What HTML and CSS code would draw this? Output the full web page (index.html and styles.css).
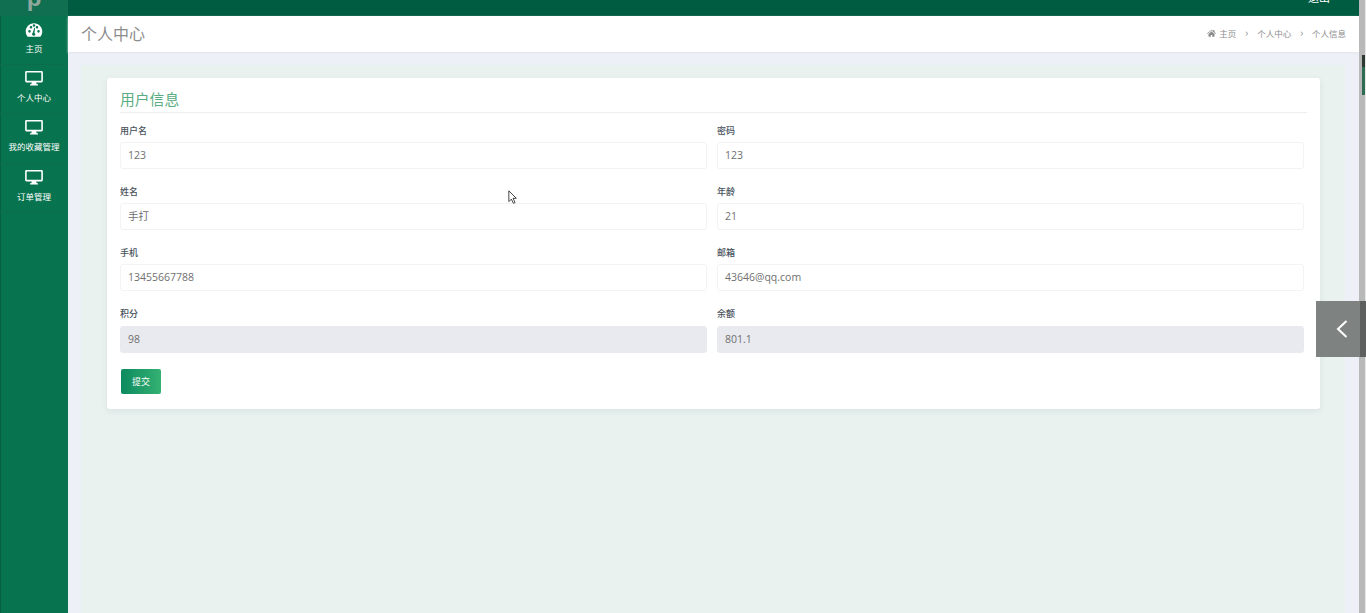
FILE: index.html
```html
<!DOCTYPE html>
<html lang="zh">
<head>
<meta charset="utf-8">
<title>个人信息</title>
<link rel="stylesheet" href="styles.css">
</head>
<body>
<div class="app">
  <aside class="sidebar">
    <div class="logo"><span class="logo-p">p</span></div>
    <nav class="nav">
      <a class="nav-item">
        <svg class="nav-icon nav-icon-wide" viewBox="0 0 24 20"><path fill="#fff" fill-rule="evenodd" d="M12 1C5.600 1 1 6 1 12c0 2.500.8 4.800 2.200 6.500.3.400.7.500 1.200.5h15.200c.5 0 .9-.1 1.200-.5C22.200 16.800 23 14.500 23 12 23 6 18.400 1 12 1zM6 13.500a1.700 1.700 0 1 1 0-3.400 1.700 1.700 0 0 1 0 3.400zM8 8a1.700 1.700 0 1 1 0-3.400A1.700 1.700 0 0 1 8 8zm4-2.200a1.700 1.700 0 1 1 0-3.400 1.700 1.700 0 0 1 0 3.400zM13.800 15.500a2.200 2.200 0 1 1-3.500-1.800L12.500 7l1 .3-1 6.600c.8.200 1.300.8 1.300 1.600zM18 13.500a1.700 1.700 0 1 1 0-3.400 1.700 1.700 0 0 1 0 3.400zM16 8a1.700 1.700 0 1 1 0-3.400A1.700 1.700 0 0 1 16 8z"/></svg>
        <span class="nav-label">主页</span>
      </a>
      <a class="nav-item">
        <svg class="nav-icon" viewBox="0 0 20 18"><path fill="#fff" fill-rule="evenodd" d="M1.500 1h17A1.500 1.500 0 0 1 20 2.500v10a1.500 1.500 0 0 1-1.500 1.500h-6l.5 2h1.500v1.300h-9V16H7l.5-2h-6A1.500 1.500 0 0 1 0 12.500v-10A1.500 1.500 0 0 1 1.500 1zM1.800 2.800v9.400h16.400V2.800z"/></svg>
        <span class="nav-label">个人中心</span>
      </a>
      <a class="nav-item">
        <svg class="nav-icon" viewBox="0 0 20 18"><path fill="#fff" fill-rule="evenodd" d="M1.500 1h17A1.500 1.500 0 0 1 20 2.500v10a1.500 1.500 0 0 1-1.500 1.500h-6l.5 2h1.500v1.300h-9V16H7l.5-2h-6A1.500 1.500 0 0 1 0 12.500v-10A1.500 1.500 0 0 1 1.500 1zM1.800 2.800v9.400h16.400V2.800z"/></svg>
        <span class="nav-label">我的收藏管理</span>
      </a>
      <a class="nav-item">
        <svg class="nav-icon" viewBox="0 0 20 18"><path fill="#fff" fill-rule="evenodd" d="M1.500 1h17A1.500 1.500 0 0 1 20 2.500v10a1.500 1.500 0 0 1-1.500 1.500h-6l.5 2h1.500v1.300h-9V16H7l.5-2h-6A1.500 1.500 0 0 1 0 12.500v-10A1.500 1.500 0 0 1 1.500 1zM1.800 2.800v9.400h16.400V2.800z"/></svg>
        <span class="nav-label">订单管理</span>
      </a>
    </nav>
  </aside>
  <div class="main">
    <header class="topbar"><span class="top-user">退出</span></header>
    <div class="page-head">
      <h1 class="page-title">个人中心</h1>
      <ol class="crumbs">
        <li class="crumb"><svg class="home" viewBox="0 0 12 10"><path fill="#8a8a8a" d="M6 .5 0 5.500l.6.700L6 1.800l5.400 4.400.6-.7-2-1.700V1H8.500v1.300zM2 6.200V10h3V7.500h2V10h3V6.200L6 3z"/></svg>主页</li>
        <li class="sep">›</li>
        <li class="crumb">个人中心</li>
        <li class="sep">›</li>
        <li class="crumb">个人信息</li>
      </ol>
    </div>
    <main class="content">
      <section class="card">
        <h2 class="card-title">用户信息</h2>
        <form class="form">
          <div class="field"><label class="label">用户名</label><div class="input">123</div></div>
          <div class="field"><label class="label">密码</label><div class="input">123</div></div>
          <div class="field"><label class="label">姓名</label><div class="input">手打</div></div>
          <div class="field"><label class="label">年龄</label><div class="input">21</div></div>
          <div class="field"><label class="label">手机</label><div class="input">13455667788</div></div>
          <div class="field"><label class="label">邮箱</label><div class="input">43646@qq.com</div></div>
          <div class="field"><label class="label">积分</label><div class="input readonly">98</div></div>
          <div class="field"><label class="label">余额</label><div class="input readonly">801.1</div></div>
        </form>
        <button class="submit" type="button">提交</button>
      </section>
    </main>
  </div>
  <div class="scrollbar"><span class="scroll-thumb"></span></div>
</div>
<div class="side-toggle"><svg viewBox="0 0 14 20" class="chev"><path fill="none" stroke="#fff" stroke-width="2" d="M11.500 2 3 10l8.500 8"/></svg></div>
<svg class="cursor" viewBox="0 0 12 18"><path fill="#fff" stroke="#222" stroke-width="1" d="M1 1v13l3-3 2.500 5 2-1-2.500-5h4z"/></svg>
</body>
</html>
```
FILE: styles.css
```css
* { box-sizing: border-box; }
html, body { margin: 0; height: 100%; overflow: hidden; }
body { font-family: "Noto Sans CJK SC", "Open Sans", "Liberation Sans", sans-serif; color: #444; background: #eef0f7; }
.app { display: flex; height: 613px; }
.sidebar { width: 68px; flex: none; background: #08744f; box-shadow: inset 1px 0 #06613f; display: flex; flex-direction: column; }
.logo { height: 16px; background: #0f6f50; overflow: hidden; display: flex; justify-content: center; }
.logo-p { font: bold 24px/1 "Liberation Sans", sans-serif; color: #8fa89e; margin-top: -14px; }
.nav { display: flex; flex-direction: column; }
.nav-item { height: 49.200px; display: flex; flex-direction: column; align-items: center; padding-top: 6px; border-bottom: 1px solid #0b6d4d; }
.nav-icon { width: 18px; height: 16px; display: block; margin-top: -1px; }
.nav-icon-wide { height: 16px; margin-top: 0; margin-bottom: -1px; }
.nav-label { font-size: 8.500px; line-height: 14px; color: #fff; margin-top: 4px; white-space: nowrap; }
.main { width: 1291px; flex: none; display: flex; flex-direction: column; }
.topbar { height: 16px; background: #005c41; display: flex; justify-content: flex-end; overflow: hidden; padding-right: 29px; }
.top-user { font-size: 11px; line-height: 1; color: #fff; margin-top: -8px; }
.page-head { height: 36px; background: #fff; box-shadow: 0 1px 2px #dfe3ec; display: flex; align-items: center; justify-content: space-between; padding: 0 13px 3px 13px; position: relative; }
.page-title { margin: 0; font-size: 16px; font-weight: 400; color: #8c8c8c; line-height: 36px; }
.crumbs { list-style: none; margin: 0; padding: 0; display: flex; align-items: center; gap: 8.750px; font-size: 8.500px; color: #8c8c8c; }
.crumb { display: flex; align-items: center; gap: 3px; }
.sep { font-size: 11px; line-height: 1; }
.home { width: 9px; height: 8px; }
.content { flex: 1; margin: 13px 14px 0 13px; background: #e9f2ee; padding: 13px 26px 0; }
.card { width: 1213px; height: 331px; background: #fff; border-radius: 3px; box-shadow: 0 2px 6px #d8e2e3; padding: 10px 13px; }
.card-title { margin: 0; font-size: 14.800px; font-weight: 400; line-height: 22px; height: 25px; color: #5aad82; border-bottom: 1px solid #eceeef; }
.form { display: grid; grid-template-columns: 587px 587px; column-gap: 10px; row-gap: 16px; margin-top: 10.500px; }
.field { display: flex; flex-direction: column; }
.label { font-size: 9px; font-weight: 500; line-height: 13px; height: 18.300px; color: #48525c; }
.input { height: 27px; border: 1px solid #f2f3f5; border-radius: 3px; padding: 0 7px; font-size: 10.500px; line-height: 25px; color: #707070; font-family: "Open Sans", "Noto Sans CJK SC", sans-serif; }
.readonly { background: #e8eaef; border-color: #e8eaef; }
.submit { display: block; margin: 16px 0 0 1px; width: 40px; height: 25px; padding: 0; border: 0; border-radius: 2px; background: linear-gradient(90deg, #0d8a5f, #34b172); color: #fff; font-family: inherit; font-size: 9px; }
.scrollbar { width: 7px; flex: none; background: #b8b8b8; border-right: 1px solid #e8e8e8; position: relative; }
.scroll-thumb { position: absolute; left: 3px; right: 0; top: 55px; height: 40px; background: linear-gradient(#2c3a33 30%, #2f6b52 30%); }
.side-toggle { position: absolute; left: 1316px; top: 301px; width: 50px; height: 56px; background: linear-gradient(90deg, #7e8280 44px, #5e605f 44px); display: flex; align-items: center; padding-left: 19px; }
.chev { width: 14px; height: 20px; }
.cursor { position: absolute; left: 508px; top: 190px; width: 10px; height: 15px; }
```
